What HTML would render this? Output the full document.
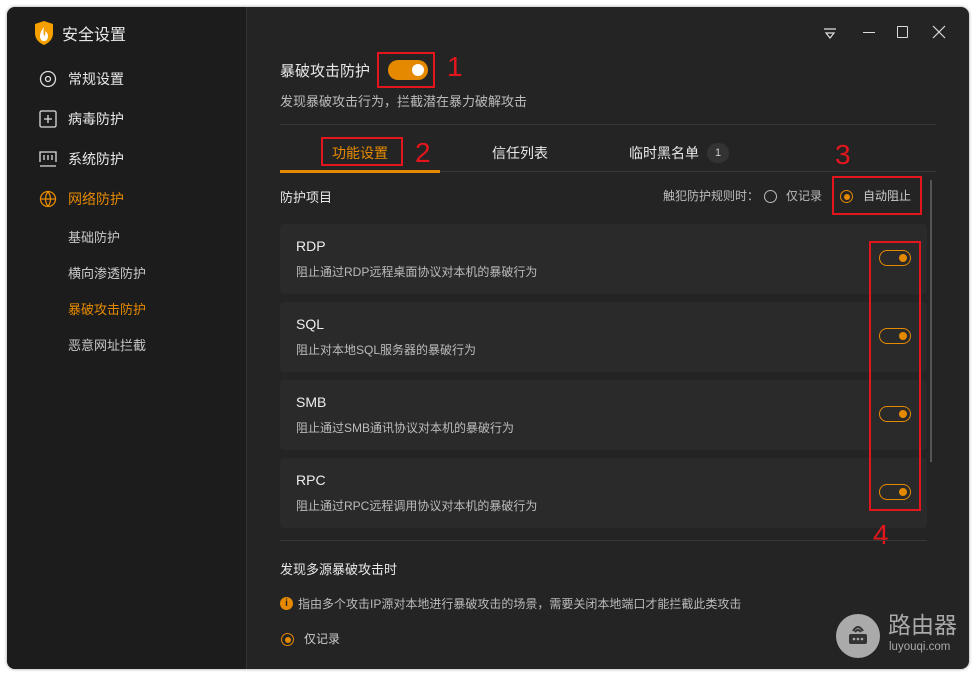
<!DOCTYPE html>
<html><head><meta charset="utf-8"><style>
*{margin:0;padding:0;box-sizing:border-box}
body{width:976px;height:676px;background:#fff;font-family:"Liberation Sans","Noto Sans CJK SC",sans-serif;position:relative;overflow:hidden}
.a{position:absolute}
.win{left:7px;top:7px;width:962px;height:662px;background:#242424;border-radius:8px;overflow:hidden;box-shadow:0 0 3px rgba(0,0,0,.4)}
.side{left:0;top:0;width:240px;height:662px;background:#1c1c1c;border-right:1px solid #333}
.t{color:#e8e8e8;white-space:nowrap}
.nav{font-size:14px;color:#e8e8e8}
.sub{font-size:13px;color:#c8c8c8}
.or{color:#e58a00}
.card{left:273px;width:647px;height:70px;background:#2a2a2a;border-radius:4px}
.card .n{left:16px;top:14px;font-size:14px;color:#eee}
.card .d{left:16px;top:39px;font-size:12px;color:#bbb}
.tg{width:32px;height:16px;border:1.5px solid #e58a00;border-radius:8px;left:599px;top:26px}
.tg:after{content:"";position:absolute;right:3px;top:2.5px;width:8px;height:8px;border-radius:50%;background:#e58a00}
.red{border:2px solid #e4161d}
.num{color:#e4161d;font-size:28px;font-family:"Liberation Sans",sans-serif}
.ic{stroke:#ddd;fill:none;stroke-width:1.3}
</style></head><body>
<div class="a win">
 <div class="a side">
  <svg class="a" style="left:27px;top:14px" width="20" height="24" viewBox="0 0 20 24"><path d="M1 3 L10 0 L19 3 L19 12 Q19 20 10 24 Q1 20 1 12Z" fill="#f5a000"/><path d="M10 6 Q6 11 6 15 Q6 20 10 20 Q14 20 14 15 Q14 12 11 10 Q12 14 10 15 Q9 11 10 6Z" fill="#fff"/></svg>
  <div class="a t" style="left:55px;top:14px;font-size:16px">安全设置</div>
  <svg class="a" style="left:32px;top:63px" width="18" height="18"><circle class="ic" cx="9" cy="9" r="7.5"/><circle class="ic" cx="9" cy="9" r="2.5"/></svg>
  <div class="a nav" style="left:61px;top:62px">常规设置</div>
  <svg class="a" style="left:32px;top:103px" width="18" height="18"><rect class="ic" x="1" y="1" width="16" height="16" rx="1.5"/><path class="ic" d="M9 5V13M5 9H13"/></svg>
  <div class="a nav" style="left:61px;top:102px">病毒防护</div>
  <svg class="a" style="left:32px;top:143px" width="18" height="18"><path class="ic" d="M1 12V2H17V12M1 16H17M5 5V10M9 5V10M13 5V10"/></svg>
  <div class="a nav" style="left:61px;top:142px">系统防护</div>
  <svg class="a" style="left:32px;top:183px" width="18" height="18"><circle cx="9" cy="9" r="7.5" stroke="#e58a00" fill="none" stroke-width="1.3"/><path d="M1.5 9H16.5M9 1.5Q4 9 9 16.5M9 1.5Q14 9 9 16.5" stroke="#e58a00" fill="none" stroke-width="1.3"/></svg>
  <div class="a nav or" style="left:61px;top:182px">网络防护</div>
  <div class="a sub" style="left:61px;top:220px">基础防护</div>
  <div class="a sub" style="left:61px;top:256px">横向渗透防护</div>
  <div class="a sub or" style="left:61px;top:292px">暴破攻击防护</div>
  <div class="a sub" style="left:61px;top:328px">恶意网址拦截</div>
 </div>
 <svg class="a" style="left:816px;top:19px" width="14" height="14"><path d="M1 3H13M3 7H11L7 12Z" stroke="#ddd" fill="none" stroke-width="1.2"/></svg>
 <div class="a" style="left:856px;top:25px;width:12px;height:1px;background:#ddd"></div>
 <div class="a" style="left:890px;top:19px;width:11px;height:12px;border:1.2px solid #ddd;border-radius:1px"></div>
 <svg class="a" style="left:925px;top:18px" width="14" height="14"><path d="M1 1L13 13M13 1L1 13" stroke="#ddd" stroke-width="1.2"/></svg>

 <div class="a t" style="left:273px;top:53px;font-size:15px">暴破攻击防护</div>
 <div class="a" style="left:381px;top:53px;width:40px;height:20px;background:#e58a00;border-radius:10px"><div class="a" style="right:4px;top:4px;width:12px;height:12px;border-radius:50%;background:#fff"></div></div>
 <div class="a red" style="left:370px;top:45px;width:58px;height:36px"></div>
 <div class="a num" style="left:440px;top:44px">1</div>
 <div class="a" style="left:273px;top:84px;font-size:13px;color:#bbb">发现暴破攻击行为，拦截潜在暴力破解攻击</div>
 <div class="a" style="left:273px;top:117px;width:656px;height:1px;background:#383838"></div>

 <div class="a or" style="left:325px;top:136px;font-size:14px">功能设置</div>
 <div class="a red" style="left:314px;top:130px;width:82px;height:29px"></div>
 <div class="a num" style="left:408px;top:130px">2</div>
 <div class="a t" style="left:485px;top:136px;font-size:14px">信任列表</div>
 <div class="a t" style="left:622px;top:136px;font-size:14px">临时黑名单</div>
 <div class="a" style="left:700px;top:136px;width:22px;height:20px;border-radius:10px;background:#333;color:#ccc;font-size:11px;text-align:center;line-height:20px">1</div>
 <div class="a num" style="left:828px;top:132px">3</div>
 <div class="a" style="left:273px;top:164px;width:656px;height:1px;background:#3a3a3a"></div>
 <div class="a" style="left:273px;top:163px;width:160px;height:3px;background:#e58a00"></div>

 <div class="a t" style="left:273px;top:180px;font-size:13px">防护项目</div>
 <div class="a" style="left:656px;top:180px;font-size:12px;color:#bbb">触犯防护规则时：</div>
 <div class="a" style="left:757px;top:183px;width:13px;height:13px;border:1px solid #bbb;border-radius:50%"></div>
 <div class="a" style="left:779px;top:180px;font-size:12px;color:#bbb">仅记录</div>
 <div class="a" style="left:833px;top:183px;width:13px;height:13px;border:1.3px solid #e58a00;border-radius:50%"><div class="a" style="left:2.5px;top:2.5px;width:6px;height:6px;border-radius:50%;background:#e58a00"></div></div>
 <div class="a" style="left:856px;top:180px;font-size:12px;color:#ccc">自动阻止</div>
 <div class="a red" style="left:825px;top:169px;width:90px;height:39px"></div>
 <div class="a" style="left:923px;top:173px;width:2px;height:282px;background:#555"></div>

 <div class="a card" style="top:217px"><div class="a n">RDP</div><div class="a d">阻止通过RDP远程桌面协议对本机的暴破行为</div><div class="a tg"></div></div>
 <div class="a card" style="top:295px"><div class="a n">SQL</div><div class="a d">阻止对本地SQL服务器的暴破行为</div><div class="a tg"></div></div>
 <div class="a card" style="top:373px"><div class="a n">SMB</div><div class="a d">阻止通过SMB通讯协议对本机的暴破行为</div><div class="a tg"></div></div>
 <div class="a card" style="top:451px"><div class="a n">RPC</div><div class="a d">阻止通过RPC远程调用协议对本机的暴破行为</div><div class="a tg"></div></div>
 <div class="a red" style="left:862px;top:234px;width:52px;height:270px"></div>
 <div class="a num" style="left:866px;top:512px">4</div>
 <div class="a" style="left:273px;top:533px;width:647px;height:1px;background:#383838"></div>

 <div class="a t" style="left:273px;top:552px;font-size:13px">发现多源暴破攻击时</div>
 <div class="a" style="left:273px;top:590px;width:13px;height:13px;border-radius:50%;background:#e58a00;color:#222;font-size:10px;font-weight:bold;text-align:center;line-height:13px">i</div>
 <div class="a" style="left:291px;top:588px;font-size:12px;color:#bbb">指由多个攻击IP源对本地进行暴破攻击的场景，需要关闭本地端口才能拦截此类攻击</div>
 <div class="a" style="left:274px;top:626px;width:13px;height:13px;border:1.3px solid #e58a00;border-radius:50%"><div class="a" style="left:2.5px;top:2.5px;width:6px;height:6px;border-radius:50%;background:#e58a00"></div></div>
 <div class="a" style="left:297px;top:623px;font-size:12px;color:#ccc">仅记录</div>

 <div class="a" style="left:829px;top:607px;width:44px;height:44px;border-radius:50%;background:#aaa"></div>
 <svg class="a" style="left:838px;top:614px" width="26" height="28"><path d="M8 10Q13 2 18 10M10 11Q13 7 16 11" stroke="#333" fill="none" stroke-width="2"/><rect x="4" y="13" width="18" height="10" rx="2" fill="#333"/><circle cx="9" cy="18" r="1.3" fill="#aaa"/><circle cx="13" cy="18" r="1.3" fill="#aaa"/><circle cx="17" cy="18" r="1.3" fill="#aaa"/></svg>
 <div class="a" style="left:881px;top:604px;font-size:23px;line-height:28px;color:#aaa">路由器</div>
 <div class="a" style="left:882px;top:633px;font-size:11.5px;line-height:14px;color:#aaa">luyouqi.com</div>
</div>
</body></html>
